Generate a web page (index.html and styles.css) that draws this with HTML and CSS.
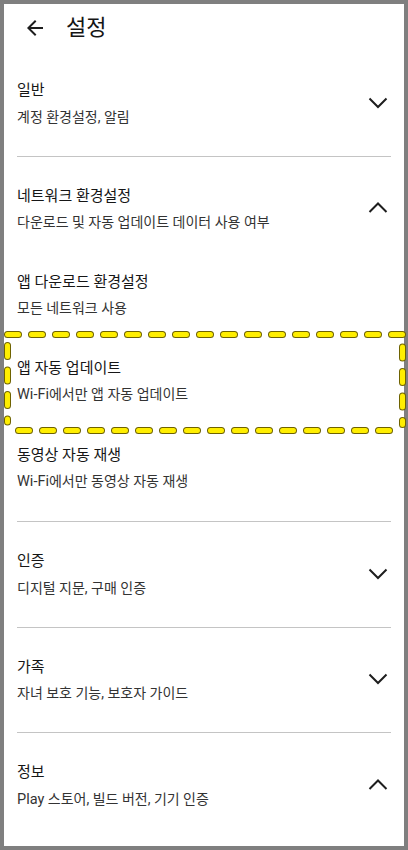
FILE: index.html
```html
<!DOCTYPE html>
<html lang="ko">
<head>
<meta charset="utf-8">
<title>설정</title>
<link rel="stylesheet" href="styles.css">
</head>
<body>
<div class="screen">
  <header class="topbar">
    <svg class="back" viewBox="0 0 24 24" width="24" height="24"><path d="M20 11H7.83l5.59-5.59L12 4l-8 8 8 8 1.41-1.41L7.83 13H20v-2z"/></svg>
    <h1 class="title">설정</h1>
  </header>

  <section class="group">
    <div class="row">
      <div class="item">
        <div class="item-title">일반</div>
        <div class="item-sub">계정 환경설정, 알림</div>
      </div>
      <svg class="chev" viewBox="0 0 24 24" width="24" height="24"><polyline points="2.5,7.5 11,16 19.5,7.5"/></svg>
    </div>
  </section>

  <section class="group">
    <div class="row">
      <div class="item">
        <div class="item-title">네트워크 환경설정</div>
        <div class="item-sub">다운로드 및 자동 업데이트 데이터 사용 여부</div>
      </div>
      <svg class="chev" viewBox="0 0 24 24" width="24" height="24"><polyline points="2.5,16 11,7.5 19.5,16"/></svg>
    </div>
    <div class="item child">
      <div class="item-title">앱 다운로드 환경설정</div>
      <div class="item-sub">모든 네트워크 사용</div>
    </div>
    <div class="item child highlighted">
      <div class="item-title">앱 자동 업데이트</div>
      <div class="item-sub"><span class="lat">Wi-Fi</span>에서만 앱 자동 업데이트</div>
      <svg class="dash-frame" viewBox="0 0 402 104" width="402" height="104">
        <g class="dash-outline">
          <line x1="3.5" y1="3.5" x2="398.5" y2="3.5"/>
          <line x1="14.5" y1="99.5" x2="385.5" y2="99.5"/>
          <line x1="3.5" y1="14.5" x2="3.5" y2="91"/>
          <line x1="398.5" y1="16" x2="398.5" y2="93.5"/>
        </g>
        <g class="dash-fill">
          <line x1="3.5" y1="3.5" x2="398.5" y2="3.5"/>
          <line x1="14.5" y1="99.5" x2="385.5" y2="99.5"/>
          <line x1="3.5" y1="14.5" x2="3.5" y2="91"/>
          <line x1="398.5" y1="16" x2="398.5" y2="93.5"/>
        </g>
      </svg>
    </div>
    <div class="item child">
      <div class="item-title">동영상 자동 재생</div>
      <div class="item-sub"><span class="lat">Wi-Fi</span>에서만 동영상 자동 재생</div>
    </div>
  </section>

  <section class="group">
    <div class="row">
      <div class="item">
        <div class="item-title">인증</div>
        <div class="item-sub">디지털 지문, 구매 인증</div>
      </div>
      <svg class="chev" viewBox="0 0 24 24" width="24" height="24"><polyline points="2.5,7.5 11,16 19.5,7.5"/></svg>
    </div>
  </section>

  <section class="group">
    <div class="row">
      <div class="item">
        <div class="item-title">가족</div>
        <div class="item-sub">자녀 보호 기능, 보호자 가이드</div>
      </div>
      <svg class="chev" viewBox="0 0 24 24" width="24" height="24"><polyline points="2.5,7.5 11,16 19.5,7.5"/></svg>
    </div>
  </section>

  <section class="group last">
    <div class="row">
      <div class="item">
        <div class="item-title">정보</div>
        <div class="item-sub"><span class="lat">Play</span> 스토어, 빌드 버전, 기기 인증</div>
      </div>
      <svg class="chev" viewBox="0 0 24 24" width="24" height="24"><polyline points="2.5,16 11,7.5 19.5,16"/></svg>
    </div>
  </section>
</div>
</body>
</html>
```

FILE: styles.css
```css
* {
  box-sizing: border-box;
}

html, body {
  margin: 0;
  padding: 0;
}

body {
  background: #7f7f7f;
  padding: 4px;
  width: 408px;
  height: 850px;
  font-family: Roboto, "Noto Sans CJK KR", sans-serif;
  color: #1c1c1c;
}

.screen {
  background: #ffffff;
  width: 400px;
  height: 842px;
  padding: 0 13px;
}

.topbar {
  height: 47px;
  display: flex;
  align-items: center;
}

.back {
  margin-left: 6px;
  fill: #1e1e1e;
  flex-shrink: 0;
}

.title {
  margin: 0 0 0 19px;
  font-size: 22px;
  font-weight: 400;
  line-height: 28px;
  color: #151515;
}

.group {
  padding: 28px 0 29px;
  border-bottom: 1px solid #c4c4c4;
}

.group.last {
  border-bottom: none;
}

.row {
  display: flex;
  align-items: center;
}

.item {
  flex: 1;
  min-width: 0;
}

.child {
  margin-top: 38.5px;
}

.item-title {
  font-size: 15px;
  line-height: 22px;
  color: #161616;
}

.item-sub {
  margin-top: 5.5px;
  font-size: 14px;
  line-height: 20px;
  color: #333333;
}

.lat {
  font-size: 14.5px;
}

.chev {
  flex-shrink: 0;
  fill: none;
  stroke: #1e1e1e;
  stroke-width: 2;
  stroke-linejoin: miter;
}

.highlighted {
  position: relative;
}

.dash-frame {
  position: absolute;
  left: -13px;
  top: -25.5px;
  pointer-events: none;
  overflow: visible;
}

.dash-outline line {
  stroke: #6e6200;
  stroke-width: 7;
  stroke-linecap: round;
  stroke-dasharray: 11 13;
}

.dash-fill line {
  stroke: #ffee00;
  stroke-width: 5;
  stroke-linecap: round;
  stroke-dasharray: 11 13;
}

.dash-outline line:nth-child(3),
.dash-outline line:nth-child(4),
.dash-fill line:nth-child(3),
.dash-fill line:nth-child(4) {
  stroke-dasharray: 11 13.5;
}
```
